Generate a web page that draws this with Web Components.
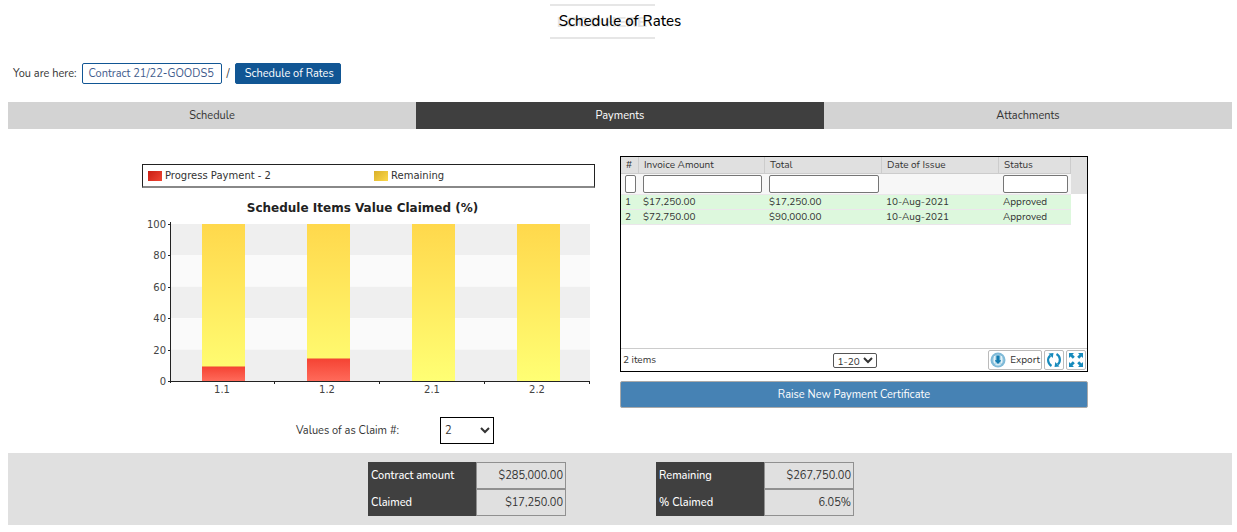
<!DOCTYPE html>
<html lang="en">
<head>
<meta charset="utf-8">
<title>Schedule of Rates</title>
<style>
  body {
    margin: 0 5px 0 8px;
    background: #fff;
    color: #333;
    font: 11px/15px "Nunito", "Noto Sans", sans-serif;
  }
</style>
</head>
<body>
<rates-page></rates-page>

<script>
const define = (name, html, setup) => {
  const template = document.createElement('template');
  template.innerHTML = html;
  customElements.define(name, class extends HTMLElement {
    constructor() {
      super();
      this.attachShadow({ mode: 'open' }).append(template.content.cloneNode(true));
    }
    connectedCallback() {
      if (setup) setup(this, this.shadowRoot);
    }
  });
};

define('page-heading', `
<style>
  :host { display: grid; justify-items: center; height: 42px; }
  .logo, h1 { grid-area: 1 / 1; }
  .logo {
    box-sizing: border-box; width: 105px; height: 35px; margin: 4px 36px 0 0;
    border: solid #e6e6e6; border-width: 2px 0;
    color: #e4e4e4; font: bold 15px/31px "Liberation Sans", sans-serif; text-align: center;
  }
  h1 { margin: 0; color: #000; font-size: 15px; line-height: 42px; font-weight: 500; z-index: 1; }
</style>
<div class="logo">LOGO HERE</div>
<h1><slot></slot></h1>`);

define('bread-crumbs', `
<style>
  :host { display: block; padding: 21px 5px 18px; }
  nav { display: flex; align-items: center; gap: 5px; }
  a {
    box-sizing: border-box; height: 21px; padding: 0 6px; border: 1px solid #115694; border-radius: 2px;
    color: #3f5b8c; line-height: 19px; text-decoration: none; min-width: 140px;
  }
  a[aria-current] { background: #115694; color: #fff; min-width: 105px; padding-left: 9px; }
</style>
<nav aria-label="Breadcrumb">
  <span>You are here:</span>
  <a href="#contract">Contract 21/22-GOODS5</a>
  /
  <a href="#rates" aria-current="page">Schedule of Rates</a>
</nav>`);

define('tab-bar', `
<style>
  :host { display: grid; grid-template-columns: repeat(3, 1fr); }
  button { height: 27px; padding: 0; border: 0; background: #d3d3d3; color: #333; font: inherit; }
  button[aria-selected="true"] { background: #3f3f3f; color: #fff; }
</style>
<button role="tab" aria-selected="false">Schedule</button>
<button role="tab" aria-selected="true">Payments</button>
<button role="tab" aria-selected="false">Attachments</button>`);

define('claims-chart', `
<style>
  :host { display: block; width: 453px; color: #333; font: 10px/15px "DejaVu Sans", sans-serif; }
  .legend {
    display: grid; grid-template-columns: 1fr 1fr; box-sizing: border-box; height: 24px; padding-left: 5px;
    border: 1px solid #222; border-bottom: 2px solid #888;
  }
  .legend span { display: flex; align-items: center; gap: 3px; }
  .legend span + span { padding-left: 3px; }
  i { width: 14px; height: 10px; background: linear-gradient(135deg, #c81e14, #f04634); }
  i.rest { background: linear-gradient(135deg, #d9b02a, #fcd84c); }
  h2 { margin: 12px 0 0; padding-right: 12px; color: #222; font-size: 12px; line-height: 16px; text-align: center; }
  svg { display: block; }
  text { fill: #444; font-size: 10px; }
</style>
<div class="legend">
  <span><i></i>Progress Payment - 2</span>
  <span><i class="rest"></i>Remaining</span>
</div>
<h2>Schedule Items Value Claimed (%)</h2>
<svg width="453" height="182" role="img" aria-label="Claimed share per schedule item">
  <defs>
    <linearGradient id="gold" x2="0" y2="1"><stop stop-color="#ffd84c"/><stop offset="1" stop-color="#ffff74"/></linearGradient>
    <linearGradient id="red" x2="0" y2="1"><stop stop-color="#f54434"/><stop offset="1" stop-color="#ff6a5a"/></linearGradient>
  </defs>
  <g id="plot"></g>
</svg>`, (host, root) => {
  const base = 165, left = 29, step = 105, unit = 1.57;
  const items = [['1.1', 9], ['1.2', 14], ['2.1', 0], ['2.2', 0]];
  let out = '';
  [100, 80, 60, 40, 20].forEach((v, i) => {
    out += `<rect x="${left}" y="${base - v * unit}" width="419" height="${20 * unit}" fill="${i % 2 ? '#fafafa' : '#efefef'}"/>`;
  });
  items.forEach(([name, claimed], i) => {
    const x = left + 31 + i * step;
    const height = Math.round(claimed * unit);
    out += `<rect x="${x}" y="${base - 157}" width="43" height="157" fill="url(#gold)"/>`;
    if (claimed) out += `<rect x="${x}" y="${base - height}" width="43" height="${height}" fill="url(#red)"/>
      <rect x="${x}" y="${base - height - 1}" width="43" height="1" fill="#f5a050"/>`;
    out += `<text x="${x + 20}" y="177" text-anchor="middle">${name}</text>`;
  });
  for (let v = 0; v <= 100; v += 20) {
    const y = Math.round(base - v * unit);
    out += `<text x="24" y="${y + 4}" text-anchor="end">${v}</text><rect x="26" y="${y}" width="3" height="1" fill="#222"/>`;
  }
  out += `<rect x="28" y="6" width="1" height="161" fill="#222"/><rect x="28" y="165" width="420" height="1" fill="#222"/>`;
  for (let i = 1; i <= 4; i++) out += `<rect x="${27 + i * step}" y="165" width="1" height="3" fill="#222"/>`;
  root.getElementById('plot').innerHTML = out;
});

define('claim-picker', `
<style>
  :host { display: flex; align-items: center; gap: 41px; }
  select { box-sizing: border-box; width: 54px; height: 27px; padding: 0; border: 1px solid #000; border-radius: 0; background: #fff; color: #333; font: inherit; }
</style>
<label for="claim">Values of as Claim #:</label>
<select id="claim"><option>1</option><option selected>2</option></select>`);

define('payments-grid', `
<style>
  :host { display: flex; flex-direction: column; box-sizing: border-box; height: 216px; border: 1px solid #000; font-size: 10px; line-height: 14px; }
  .data { flex: 1; }
  table { width: 100%; table-layout: fixed; border-collapse: separate; border-spacing: 0; }
  th, td { box-sizing: border-box; padding: 0 4px; text-align: left; font-weight: 400; white-space: nowrap; }
  thead th { height: 17px; padding-left: 5px; border-right: 1px solid #ccc; border-bottom: 1px solid #ccc; background: #e0e0e0; }
  thead td { height: 20px; padding: 0 3px 0 4px; background: #f7f7f7; }
  thead .rail { padding: 0; border: 0; background: #e0e0e0; }
  tbody td { height: 15px; border-top: 1px solid #ebe6eb; background: #ddf8dd; }
  tbody td:last-child { background: none; border: 0; }
  tbody tr:last-child td:not(:last-child) { height: 16px; border-bottom: 1px solid #ebe6eb; }
  input { display: block; box-sizing: border-box; width: 100%; height: 18px; margin: 0; padding: 0 2px; border: 1px solid #767676; border-radius: 2px; font: inherit; }
  footer { display: grid; grid-template-columns: 1fr auto 1fr; align-items: center; height: 22px; padding: 0 1px 0 2px; border-top: 1px solid #ccc; }
  select { box-sizing: border-box; width: 44px; height: 15px; padding: 0; border: 1px solid #555; border-radius: 2px; background: #fff; color: #333; font: inherit; }
  .tools { display: flex; justify-content: flex-end; gap: 2px; }
  button { display: flex; align-items: center; justify-content: center; gap: 4px; box-sizing: border-box; min-width: 20px; height: 20px; padding: 0 1px; border: 1px solid #bbb; border-radius: 2px; background: #fff; color: #333; font: inherit; }
</style>
<div class="data"><table>
  <colgroup><col width="18"><col width="126"><col width="117"><col width="117"><col width="72"><col width="16"></colgroup>
  <thead>
    <tr><th>#</th><th>Invoice Amount</th><th>Total</th><th>Date of Issue</th><th>Status</th><th class="rail"></th></tr>
    <tr>
      <td><input aria-label="Filter number"></td><td><input aria-label="Filter invoice amount"></td>
      <td><input aria-label="Filter total"></td><td></td><td><input aria-label="Filter status"></td><td class="rail"></td>
    </tr>
  </thead>
  <tbody>
    <tr><td>1</td><td>$17,250.00</td><td>$17,250.00</td><td>10-Aug-2021</td><td>Approved</td><td></td></tr>
    <tr><td>2</td><td>$72,750.00</td><td>$90,000.00</td><td>10-Aug-2021</td><td>Approved</td><td></td></tr>
  </tbody>
</table></div>
<footer>
  <span>2 items</span>
  <select aria-label="Rows shown"><option>1-20</option></select>
  <div class="tools">
    <button>
      <svg width="16" height="16" viewBox="0 0 16 16"><circle cx="8" cy="8" r="7.5" fill="#7fbad8"/><circle cx="8" cy="8" r="5.4" fill="#b9dbea"/><path d="M6.400 3.500h3.200v4.700h2L8 12 4.400 8.200h2z" fill="#127bb0"/><path d="M5.500 12.800h5M4.500 4v7M11.500 4v7" stroke="#e4f2f8"/></svg>
      Export
    </button>
    <button aria-label="Refresh">
      <svg width="16" height="16" viewBox="0 0 16 16"><path d="M5.500 14C1.500 11.500 1 6.500 4.300 3.600M10.500 2c4 2.500 4.500 7.500 1.200 10.400" fill="none" stroke="#168abc" stroke-width="2.200"/><path d="M2.500 1.600l5-.6-.8 5zM13.500 14.400l-5 .6.8-5z" fill="#168abc"/></svg>
    </button>
    <button aria-label="Expand">
      <svg width="16" height="16" viewBox="0 0 16 16" fill="#168abc"><path d="M1 1h5L4.500 2.500l2.300 2.300-2 2-2.300-2.300L1 6zM15 1h-5l1.500 1.500-2.300 2.300 2 2 2.300-2.300L15 6zM1 15h5l-1.500-1.500 2.300-2.300-2-2-2.300 2.300L1 10zM15 15h-5l1.500-1.500-2.300-2.300 2-2 2.300 2.300L15 10z"/></svg>
    </button>
  </div>
</footer>`);

define('primary-button', `
<style>
  :host { display: block; }
  button { display: block; box-sizing: border-box; width: 100%; height: 27px; padding: 0; border: 1px solid #aaa; border-radius: 2px; background: #4682b4; color: #fff; font: inherit; }
</style>
<button><slot></slot></button>`);

define('summary-table', `
<style>
  :host { display: block; }
  table { border-collapse: separate; border-spacing: 0; }
  th, td { box-sizing: border-box; height: 27px; padding: 0 2px; }
  th { width: 108px; padding-left: 3px; background: #404040; color: #fff; font-weight: 500; text-align: left; }
  td { width: 90px; border: 1px solid #909090; text-align: right; }
</style>
<table><tbody></tbody></table>`, (host, root) => {
  root.querySelector('tbody').innerHTML = host.getAttribute('rows').split('|').map(row => {
    const [label, value] = row.split('=');
    return `<tr><th scope="row">${label}</th><td>${value}</td></tr>`;
  }).join('');
});

define('rates-page', `
<style>
  :host { display: block; }
  main { display: grid; grid-template-columns: 1fr 1fr; padding: 27px 0 9px; }
  .chart { display: flex; flex-direction: column; align-items: flex-end; gap: 19px; padding: 8px 25px 0 0; }
  claim-picker { margin-right: 101px; }
  .payments { width: 468px; display: grid; gap: 9px; align-content: start; }
  .totals { display: flex; justify-content: center; gap: 90px; padding: 9px 18px 9px 0; background: #e0e0e0; }
</style>
<page-heading>Schedule of Rates</page-heading>
<bread-crumbs></bread-crumbs>
<tab-bar role="tablist"></tab-bar>
<main>
  <div class="chart">
    <claims-chart></claims-chart>
    <claim-picker></claim-picker>
  </div>
  <div class="payments">
    <payments-grid></payments-grid>
    <primary-button>Raise New Payment Certificate</primary-button>
  </div>
</main>
<div class="totals">
  <summary-table rows="Contract amount=$285,000.00|Claimed=$17,250.00"></summary-table>
  <summary-table rows="Remaining=$267,750.00|% Claimed=6.05%"></summary-table>
</div>`);
</script>
</body>
</html>
